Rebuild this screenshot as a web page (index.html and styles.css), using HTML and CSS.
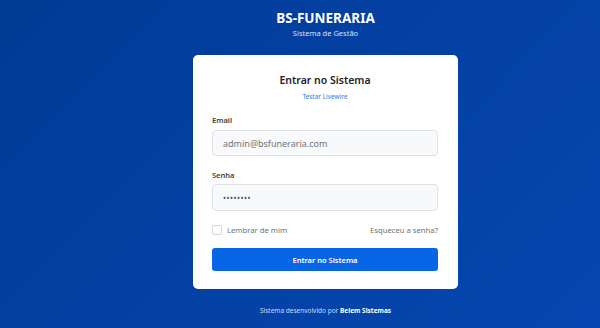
FILE: index.html
```html
<!DOCTYPE html>
<html lang="pt-BR">
<head>
    <meta charset="UTF-8">
    <meta name="viewport" content="width=device-width, initial-scale=1.0">
    <title>BS-FUNERARIA - Entrar</title>
    <link rel="stylesheet" href="styles.css">
</head>
<body>

    <div class="page">
        <!-- Cabeçalho -->
        <div class="brand">
            <h1>BS-FUNERARIA</h1>
            <p>Sistema de Gestão</p>
        </div>

        <!-- Cartão de login -->
        <div class="login-card">
            <h2>Entrar no Sistema</h2>
            <a class="test-link" href="#">Testar Livewire</a>

            <form class="login-form" onsubmit="return false">
                <label for="email">Email</label>
                <input id="email" type="email" placeholder="admin@bsfuneraria.com">

                <label for="senha" class="second">Senha</label>
                <input id="senha" type="password" value="password">

                <div class="form-row">
                    <label class="remember"><input type="checkbox"> <span>Lembrar de mim</span></label>
                    <a href="#" class="forgot">Esqueceu a senha?</a>
                </div>

                <button type="submit" class="btn-login">Entrar no Sistema</button>
            </form>
        </div>

        <p class="footer">Sistema desenvolvido por <strong>Belem Sistemas</strong></p>
    </div>

</body>
</html>
```

FILE: styles.css
```css
body {
    margin: 0;
    padding: 0;
    font-family: "Noto Sans", "Open Sans", sans-serif;
    background: linear-gradient(135deg, #003b95, #0646b0);
    min-height: 328px;
    overflow: hidden;
}

.page {
    padding-left: 51px;
    display: flex;
    flex-direction: column;
    align-items: center;
}

.brand {
    text-align: center;
    padding-top: 9px;
}

.brand h1 {
    margin: 0;
    font-size: 13.5px;
    line-height: 18px;
    font-weight: 700;
    color: #fff;
}

.brand p {
    margin: 0;
    font-size: 7.5px;
    line-height: 12px;
    color: #d5e3ff;
}

.login-card {
    width: 265px;
    box-sizing: border-box;
    margin-top: 16px;
    padding: 17px 20px 18px 19px;
    background: #fff;
    border-radius: 5px;
    text-align: center;
}

.login-card h2 {
    margin: 0;
    font-size: 10.5px;
    line-height: 16px;
    font-weight: 600;
    color: #1f2328;
}

.test-link {
    display: block;
    margin-top: 4px;
    font-size: 6.5px;
    line-height: 10px;
    color: #2f7cf0;
    text-decoration: none;
}

.login-form {
    display: flex;
    flex-direction: column;
    text-align: left;
}

.login-form > label {
    margin-top: 12px;
    font-size: 7.5px;
    line-height: 12px;
    font-weight: 600;
    color: #3a3f45;
}

.login-form > label.second {
    margin-top: 13px;
}

.login-form input[type="email"],
.login-form input[type="password"] {
    margin-top: 4px;
    height: 26px;
    box-sizing: border-box;
    padding: 0 10px;
    font-family: inherit;
    font-size: 9px;
    color: #495057;
    background: #f8f9fa;
    border: 1px solid #dfe3e8;
    border-radius: 4px;
    outline: none;
}

.login-form input[type="password"] {
    margin-top: 3px;
    height: 27px;
    font-size: 8px;
    letter-spacing: 0.5px;
}

.login-form input::placeholder {
    color: #6f767d;
}

.form-row {
    margin-top: 13px;
    display: flex;
    justify-content: space-between;
    align-items: center;
    height: 12px;
    font-size: 7.7px;
    color: #6c737a;
}

.remember {
    display: flex;
    align-items: center;
    gap: 5px;
}

.remember input {
    margin: 0;
    width: 10px;
    height: 10px;
    appearance: none;
    border: 1px solid #d3d8de;
    border-radius: 2px;
    background: #fff;
}

.forgot {
    color: #6c737a;
    text-decoration: none;
}

.btn-login {
    margin-top: 12px;
    height: 23px;
    border: none;
    border-radius: 3px;
    background: #0866e6;
    color: #fff;
    font-family: inherit;
    font-size: 7.5px;
    font-weight: 600;
    cursor: pointer;
}

.footer {
    margin: 17px 0 0;
    font-size: 6.5px;
    line-height: 10px;
    color: #c9dbff;
}

.footer strong {
    color: #fff;
}
```
